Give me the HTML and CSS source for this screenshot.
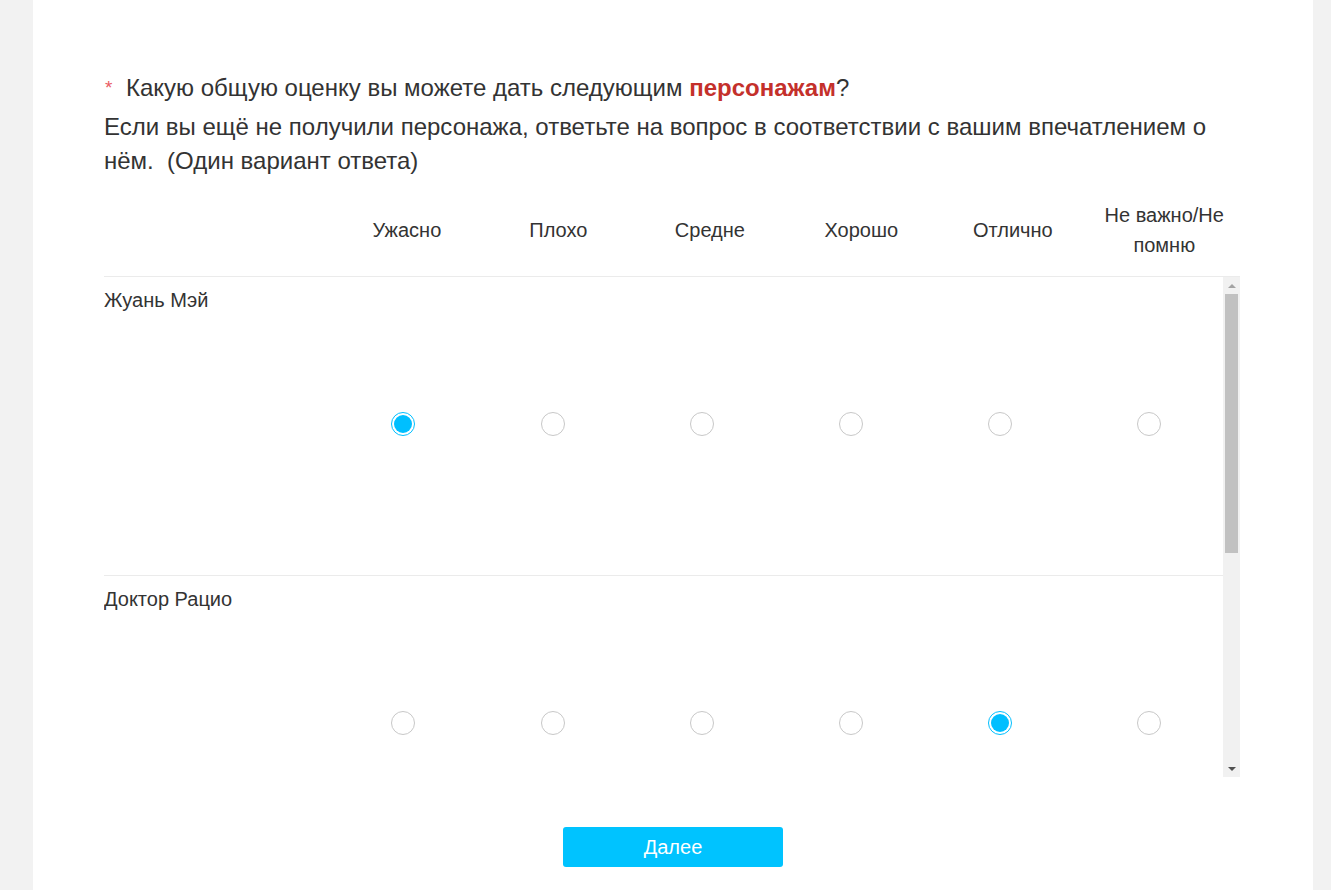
FILE: index.html
```html
<!DOCTYPE html>
<html lang="ru">
<head>
<meta charset="utf-8">
<title>Опрос</title>
<link rel="stylesheet" href="styles.css">
</head>
<body>
<div class="page">
  <div class="content">
    <div class="question">
      <div class="title"><span class="req">*</span>Какую общую оценку вы можете дать следующим <b class="hl">персонажам</b>?</div>
      <div class="desc">Если вы ещё не получили персонажа, ответьте на вопрос в соответствии с вашим впечатлением о нём.&nbsp; (Один вариант ответа)</div>
    </div>

    <div class="matrix">
      <div class="head grid">
        <div class="hcell"></div>
        <div class="hcell">Ужасно</div>
        <div class="hcell">Плохо</div>
        <div class="hcell">Средне</div>
        <div class="hcell">Хорошо</div>
        <div class="hcell">Отлично</div>
        <div class="hcell">Не важно/Не помню</div>
      </div>
      <div class="scrollwrap">
        <div class="scroll">
          <div class="row grid">
            <div class="label">Жуань Мэй</div>
            <div class="cell"><span class="radio on"></span></div>
            <div class="cell"><span class="radio"></span></div>
            <div class="cell"><span class="radio"></span></div>
            <div class="cell"><span class="radio"></span></div>
            <div class="cell"><span class="radio"></span></div>
            <div class="cell"><span class="radio"></span></div>
          </div>
          <div class="row grid">
            <div class="label">Доктор Рацио</div>
            <div class="cell"><span class="radio"></span></div>
            <div class="cell"><span class="radio"></span></div>
            <div class="cell"><span class="radio"></span></div>
            <div class="cell"><span class="radio"></span></div>
            <div class="cell"><span class="radio on"></span></div>
            <div class="cell"><span class="radio"></span></div>
          </div>
        </div>
        <div class="sbar">
          <div class="sb-btn"><span class="arr up"></span></div>
          <div class="sb-thumb"></div>
          <div class="sb-rest"></div>
          <div class="sb-btn"><span class="arr down"></span></div>
        </div>
      </div>
    </div>

    <div class="actions">
      <button class="next" type="button">Далее</button>
    </div>
  </div>
</div>
</body>
</html>
```

FILE: styles.css
```css
html, body {
  margin: 0;
  padding: 0;
  background: #f2f2f2;
  font-family: "Liberation Sans", Arial, sans-serif;
  color: #333;
}

.page {
  margin-left: 33px;
  width: 1280px;
  min-height: 890px;
  background: #fff;
  overflow: hidden;
}

.content {
  width: 1136px;
  margin-left: 71px;
  padding-top: 71px;
}

.question {
  font-size: 24px;
}

.title {
  line-height: 34px;
}

.req {
  color: #ea5b63;
  font-size: 19px;
  display: inline-block;
  width: 21px;
  padding-left: 1px;
  vertical-align: top;
}

.hl {
  color: #c4302b;
}

.desc {
  margin-top: 5px;
  line-height: 34px;
}

.matrix {
  margin-top: 10px;
}

.grid {
  display: grid;
  grid-template-columns: 20% repeat(6, 1fr);
}

.head {
  border-bottom: 1px solid #ebebeb;
}

.hcell {
  font-size: 20px;
  line-height: 30px;
  text-align: center;
  padding: 12px 0 16px;
  min-height: 60px;
  display: flex;
  align-items: center;
  justify-content: center;
}

.scrollwrap {
  display: flex;
  height: 500px;
}

.scroll {
  flex: 1;
  overflow: hidden;
}

.row {
  height: 298px;
  border-bottom: 1px solid #ebebeb;
}

.label {
  font-size: 20px;
  line-height: 30px;
  padding-top: 8px;
  align-self: start;
}

.cell {
  display: flex;
  align-items: center;
  justify-content: center;
  padding-bottom: 4px;
  padding-left: 2px;
}

.radio {
  box-sizing: border-box;
  width: 24px;
  height: 24px;
  border-radius: 50%;
  border: 1px solid #c8c8c8;
  background: #fff;
  display: inline-block;
}

.radio.on {
  border-color: #00bfff;
  padding: 2px;
  background: #00bfff content-box;
}

.sbar {
  width: 17px;
  background: #f1f1f1;
  display: flex;
  flex-direction: column;
}

.sb-btn {
  height: 17px;
  display: flex;
  align-items: center;
  justify-content: center;
}

.arr {
  width: 0;
  height: 0;
  border-left: 4px solid transparent;
  border-right: 4px solid transparent;
}

.arr.up {
  border-bottom: 4px solid #a3a3a3;
}

.arr.down {
  border-top: 4px solid #505050;
}

.sb-thumb {
  height: 259px;
  margin: 0 2px;
  background: #c1c1c1;
}

.sb-rest {
  flex: 1;
}

.actions {
  display: flex;
  justify-content: center;
  margin-top: 50px;
  padding-bottom: 24px;
}

.next {
  width: 220px;
  height: 40px;
  border: 0;
  border-radius: 3px;
  background: #00c3ff;
  color: #fff;
  font-family: "Liberation Sans", Arial, sans-serif;
  font-size: 20px;
  margin-left: 2px;
}
```
